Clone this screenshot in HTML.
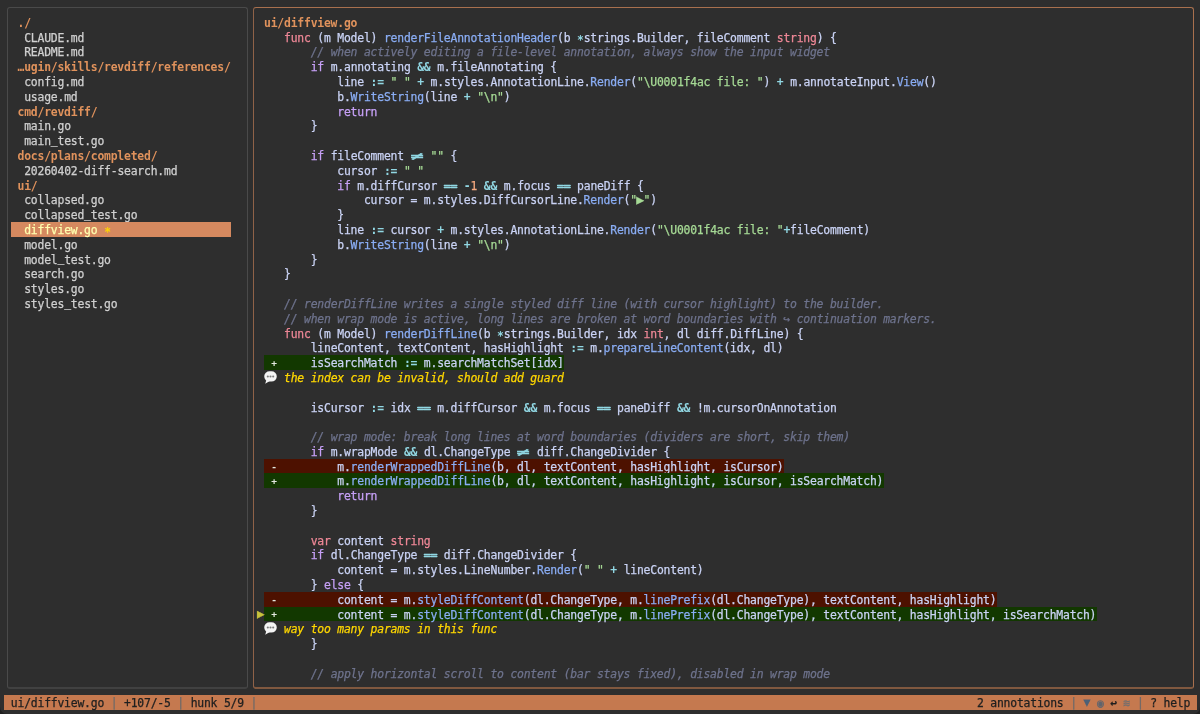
<!DOCTYPE html>
<html lang="en"><head><meta charset="utf-8"><title>revdiff - ui/diffview.go</title>
<style>
html,body{margin:0;padding:0;background:#2e2e2e;will-change:transform;}
body{width:1200px;height:714px;overflow:hidden;position:relative;font-family:"DejaVu Sans Mono","Liberation Mono",monospace;font-size:11.4px;color:#cad3f5;}
.r{position:absolute;left:0;height:14.795px;line-height:17.195px;white-space:pre;margin:0;letter-spacing:-0.2005px;-webkit-text-stroke:0.25px currentColor;}
.r>*{}
.seg{position:absolute;top:0;height:14.795px;white-space:pre;}
.pane{position:absolute;box-sizing:border-box;border:1px solid #4d4d4d;border-radius:3px;}
.d{color:#e0925c;font-weight:bold;-webkit-text-stroke:0;}
.fl{color:#d0d0d0;}
.k{color:#c6a0f6;}
.kd{color:#ed8796;}
.f{color:#8aadf4;}
.s{color:#a6da95;}
.n{color:#f5a97f;}
.o{color:#91d7e3;font-weight:bold;-webkit-text-stroke:0;}
.c{color:#6e738d;font-style:italic;}
.add{background:#123800;}
.rem{background:#4d1100;}
.ann{color:#ffd700;font-style:italic;}
.sy{font-family:"DejaVu Sans Mono","DejaVu Sans",monospace;font-style:normal;}
.st{position:relative;top:2px;}
.eq{-webkit-text-stroke:0.45px currentColor;font-weight:normal;text-shadow:0.55px 0 0 currentColor,-0.55px 0 0 currentColor;}
.ne{display:inline-block;width:13.326px;text-align:center;transform:scaleX(1.9);letter-spacing:0;font-weight:normal;-webkit-text-stroke:0.45px currentColor;}
.ic{position:relative;}
.us{position:relative;top:-1.4px;}
.tri{display:inline-block;width:6.663px;font-size:13px;line-height:0;letter-spacing:0;text-indent:-0.6px;}
.bub{position:absolute;left:0;top:0.8px;}
.sb{background:#c5794f;color:#202020;}
.sep{color:#6f6a68;font-style:normal;}
</style></head><body>
<div class="pane" style="left:7px;top:7px;width:241px;height:682px;border-color:#4a4a4a;border-bottom:2px solid #414141"></div>
<div class="pane" style="left:253px;top:7px;width:941px;height:682px;border-color:#a8704e;border-left-color:#8f6248;border-bottom:2px solid #80583f"></div>
<div class="r " style="top:14.845px;"><span class="seg d" style="left:17.526px;">./</span></div>
<div class="r " style="top:29.64px;"><span class="seg fl" style="left:24.189px;">CLAUDE.md</span></div>
<div class="r " style="top:44.435px;"><span class="seg fl" style="left:24.189px;">README.md</span></div>
<div class="r " style="top:59.23px;"><span class="seg d" style="left:17.526px;">…ugin/skills/revdiff/references/</span></div>
<div class="r " style="top:74.025px;"><span class="seg fl" style="left:24.189px;">config.md</span></div>
<div class="r " style="top:88.82px;"><span class="seg fl" style="left:24.189px;">usage.md</span></div>
<div class="r " style="top:103.615px;"><span class="seg d" style="left:17.526px;">cmd/revdiff/</span></div>
<div class="r " style="top:118.41px;"><span class="seg fl" style="left:24.189px;">main.go</span></div>
<div class="r " style="top:133.205px;"><span class="seg fl" style="left:24.189px;">main<span class="us">_</span>test.go</span></div>
<div class="r " style="top:148.0px;"><span class="seg d" style="left:17.526px;">docs/plans/completed/</span></div>
<div class="r " style="top:162.795px;"><span class="seg fl" style="left:24.189px;">20260402-diff-search.md</span></div>
<div class="r " style="top:177.59px;"><span class="seg d" style="left:17.526px;">ui/</span></div>
<div class="r " style="top:192.385px;"><span class="seg fl" style="left:24.189px;">collapsed.go</span></div>
<div class="r " style="top:207.18px;"><span class="seg fl" style="left:24.189px;">collapsed<span class="us">_</span>test.go</span></div>
<div class="r " style="top:221.975px;"><span class="seg " style="left:10.863px;width:219.879px;background:#d5895f;"></span><span class="seg " style="left:24.189px;color:#ffffaf;">diffview.go</span><span class="seg " style="left:104.145px;color:#ffd700;margin-top:1.6px;">*</span></div>
<div class="r " style="top:236.77px;"><span class="seg fl" style="left:24.189px;">model.go</span></div>
<div class="r " style="top:251.565px;"><span class="seg fl" style="left:24.189px;">model<span class="us">_</span>test.go</span></div>
<div class="r " style="top:266.36px;"><span class="seg fl" style="left:24.189px;">search.go</span></div>
<div class="r " style="top:281.155px;"><span class="seg fl" style="left:24.189px;">styles.go</span></div>
<div class="r " style="top:295.95px;"><span class="seg fl" style="left:24.189px;">styles<span class="us">_</span>test.go</span></div>
<div class="r " style="top:14.845px;"><span class="seg d" style="left:264.057px;">ui/diffview.go</span></div>
<div class="r " style="top:29.64px;"><span class="seg " style="left:284.046px;"><span class="kd">func</span> (m Model) <span class="f">renderFileAnnotationHeader</span>(b <b class="o st">*</b>strings.Builder, fileComment <span class="kd">string</span>) {</span></div>
<div class="r " style="top:44.435px;"><span class="seg " style="left:284.046px;">    <span class="c">// when actively editing a file-level annotation, always show the input widget</span></span></div>
<div class="r " style="top:59.23px;"><span class="seg " style="left:284.046px;">    <span class="k">if</span> m.annotating <span class="o">&amp;&amp;</span> m.fileAnnotating {</span></div>
<div class="r " style="top:74.025px;"><span class="seg " style="left:284.046px;">        line <span class="o">:=</span> <span class="s">" "</span> <span class="o">+</span> m.styles.AnnotationLine.<span class="f">Render</span>(<span class="s">"\U0001f4ac file: "</span>) <span class="o">+</span> m.annotateInput.<span class="f">View</span>()</span></div>
<div class="r " style="top:88.82px;"><span class="seg " style="left:284.046px;">        b.<span class="f">WriteString</span>(line <span class="o">+</span> <span class="s">"\n"</span>)</span></div>
<div class="r " style="top:103.615px;"><span class="seg " style="left:284.046px;">        <span class="k">return</span></span></div>
<div class="r " style="top:118.41px;"><span class="seg " style="left:284.046px;">    }</span></div>
<div class="r " style="top:148.0px;"><span class="seg " style="left:284.046px;">    <span class="k">if</span> fileComment <b class="o ne">≠</b> <span class="s">""</span> {</span></div>
<div class="r " style="top:162.795px;"><span class="seg " style="left:284.046px;">        cursor <span class="o">:=</span> <span class="s">" "</span></span></div>
<div class="r " style="top:177.59px;"><span class="seg " style="left:284.046px;">        <span class="k">if</span> m.diffCursor <b class="o eq">==</b> <span class="o">-</span><span class="n">1</span> <span class="o">&amp;&amp;</span> m.focus <b class="o eq">==</b> paneDiff {</span></div>
<div class="r " style="top:192.385px;"><span class="seg " style="left:284.046px;">            cursor = m.styles.DiffCursorLine.<span class="f">Render</span>(<span class="s">"<i class="sy tri">▶</i>"</span>)</span></div>
<div class="r " style="top:207.18px;"><span class="seg " style="left:284.046px;">        }</span></div>
<div class="r " style="top:221.975px;"><span class="seg " style="left:284.046px;">        line <span class="o">:=</span> cursor <span class="o">+</span> m.styles.AnnotationLine.<span class="f">Render</span>(<span class="s">"\U0001f4ac file: "</span><span class="o">+</span>fileComment)</span></div>
<div class="r " style="top:236.77px;"><span class="seg " style="left:284.046px;">        b.<span class="f">WriteString</span>(line <span class="o">+</span> <span class="s">"\n"</span>)</span></div>
<div class="r " style="top:251.565px;"><span class="seg " style="left:284.046px;">    }</span></div>
<div class="r " style="top:266.36px;"><span class="seg " style="left:284.046px;">}</span></div>
<div class="r " style="top:295.95px;"><span class="seg " style="left:284.046px;"><span class="c">// renderDiffLine writes a single styled diff line (with cursor highlight) to the builder.</span></span></div>
<div class="r " style="top:310.745px;"><span class="seg " style="left:284.046px;"><span class="c">// when wrap mode is active, long lines are broken at word boundaries with <i class="sy">↪</i> continuation markers.</span></span></div>
<div class="r " style="top:325.54px;"><span class="seg " style="left:284.046px;"><span class="kd">func</span> (m Model) <span class="f">renderDiffLine</span>(b <b class="o st">*</b>strings.Builder, idx <span class="kd">int</span>, dl diff.DiffLine) {</span></div>
<div class="r " style="top:340.335px;"><span class="seg " style="left:284.046px;">    lineContent, textContent, hasHighlight <span class="o">:=</span> m.<span class="f">prepareLineContent</span>(idx, dl)</span></div>
<div class="r " style="top:355.13px;"><span class="seg add" style="left:264.057px;width:299.835px;"></span><span class="seg " style="left:270.72px;color:#e4e8e0;font-size:9.5px;font-weight:bold;margin-left:0.47px;margin-top:-1.2px;letter-spacing:0;-webkit-text-stroke:0;">+</span><span class="seg " style="left:284.046px;">    isSearchMatch <span class="o">:=</span> m.searchMatchSet[idx]</span></div>
<div class="r " style="top:369.925px;"><span class="seg" style="left:264.057px;width:13.326px"><svg class="bub" viewBox="0 0 14 14" width="13.4" height="13.4"><path d="M2.500 9.200L1.300 13.300 6 10.500z" fill="#f4f4f4"/><rect x=".3" y=".3" width="13" height="10.800" rx="5.500" ry="5" fill="#f4f4f4"/><circle cx="4" cy="5.700" r="1.100" fill="#7c7c7c"/><circle cx="6.800" cy="5.700" r="1.100" fill="#7c7c7c"/><circle cx="9.600" cy="5.700" r="1.100" fill="#7c7c7c"/></svg></span><span class="seg ann" style="left:284.046px;">the index can be invalid, should add guard</span></div>
<div class="r " style="top:399.515px;"><span class="seg " style="left:284.046px;">    isCursor <span class="o">:=</span> idx <b class="o eq">==</b> m.diffCursor <span class="o">&amp;&amp;</span> m.focus <b class="o eq">==</b> paneDiff <span class="o">&amp;&amp;</span> !m.cursorOnAnnotation</span></div>
<div class="r " style="top:429.105px;"><span class="seg " style="left:284.046px;">    <span class="c">// wrap mode: break long lines at word boundaries (dividers are short, skip them)</span></span></div>
<div class="r " style="top:443.9px;"><span class="seg " style="left:284.046px;">    <span class="k">if</span> m.wrapMode <span class="o">&amp;&amp;</span> dl.ChangeType <b class="o ne">≠</b> diff.ChangeDivider {</span></div>
<div class="r " style="top:458.695px;"><span class="seg rem" style="left:264.057px;width:519.714px;"></span><span class="seg " style="left:270.72px;color:#e4e8e0;font-size:9.5px;font-weight:bold;margin-left:0.47px;margin-top:-1.2px;letter-spacing:0;-webkit-text-stroke:0;">-</span><span class="seg " style="left:284.046px;">        m.<span class="f">renderWrappedDiffLine</span>(b, dl, textContent, hasHighlight, isCursor)</span></div>
<div class="r " style="top:473.49px;"><span class="seg add" style="left:264.057px;width:619.659px;"></span><span class="seg " style="left:270.72px;color:#e4e8e0;font-size:9.5px;font-weight:bold;margin-left:0.47px;margin-top:-1.2px;letter-spacing:0;-webkit-text-stroke:0;">+</span><span class="seg " style="left:284.046px;">        m.<span class="f">renderWrappedDiffLine</span>(b, dl, textContent, hasHighlight, isCursor, isSearchMatch)</span></div>
<div class="r " style="top:488.285px;"><span class="seg " style="left:284.046px;">        <span class="k">return</span></span></div>
<div class="r " style="top:503.08px;"><span class="seg " style="left:284.046px;">    }</span></div>
<div class="r " style="top:532.67px;"><span class="seg " style="left:284.046px;">    <span class="kd">var</span> content <span class="kd">string</span></span></div>
<div class="r " style="top:547.465px;"><span class="seg " style="left:284.046px;">    <span class="k">if</span> dl.ChangeType <b class="o eq">==</b> diff.ChangeDivider {</span></div>
<div class="r " style="top:562.26px;"><span class="seg " style="left:284.046px;">        content = m.styles.LineNumber.<span class="f">Render</span>(<span class="s">" "</span> <span class="o">+</span> lineContent)</span></div>
<div class="r " style="top:577.055px;"><span class="seg " style="left:284.046px;">    } <span class="k">else</span> {</span></div>
<div class="r " style="top:591.85px;"><span class="seg rem" style="left:264.057px;width:732.93px;"></span><span class="seg " style="left:270.72px;color:#e4e8e0;font-size:9.5px;font-weight:bold;margin-left:0.47px;margin-top:-1.2px;letter-spacing:0;-webkit-text-stroke:0;">-</span><span class="seg " style="left:284.046px;">        content = m.<span class="f">styleDiffContent</span>(dl.ChangeType, m.<span class="f">linePrefix</span>(dl.ChangeType), textContent, hasHighlight)</span></div>
<div class="r " style="top:606.645px;"><span class="seg add" style="left:264.057px;width:832.875px;"></span><span class="seg " style="left:270.72px;color:#e4e8e0;font-size:9.5px;font-weight:bold;margin-left:0.47px;margin-top:-1.2px;letter-spacing:0;-webkit-text-stroke:0;">+</span><span class="seg sy" style="left:257.394px;color:#c8c23c;font-size:12.5px;margin-top:-1.2px;margin-left:-0.3px;letter-spacing:0;">▶</span><span class="seg " style="left:284.046px;">        content = m.<span class="f">styleDiffContent</span>(dl.ChangeType, m.<span class="f">linePrefix</span>(dl.ChangeType), textContent, hasHighlight, isSearchMatch)</span></div>
<div class="r " style="top:621.44px;"><span class="seg" style="left:264.057px;width:13.326px"><svg class="bub" viewBox="0 0 14 14" width="13.4" height="13.4"><path d="M2.500 9.200L1.300 13.300 6 10.500z" fill="#f4f4f4"/><rect x=".3" y=".3" width="13" height="10.800" rx="5.500" ry="5" fill="#f4f4f4"/><circle cx="4" cy="5.700" r="1.100" fill="#7c7c7c"/><circle cx="6.800" cy="5.700" r="1.100" fill="#7c7c7c"/><circle cx="9.600" cy="5.700" r="1.100" fill="#7c7c7c"/></svg></span><span class="seg ann" style="left:284.046px;">way too many params in this func</span></div>
<div class="r " style="top:636.235px;"><span class="seg " style="left:284.046px;">    }</span></div>
<div class="r " style="top:665.825px;"><span class="seg " style="left:284.046px;">    <span class="c">// apply horizontal scroll to content (bar stays fixed), disabled in wrap mode</span></span></div>
<div class="r " style="top:695.415px;"><span class="seg sb" style="left:4.2px;width:1192.677px;"></span><span class="seg " style="left:4.2px;color:#202020;"> ui/diffview.go <i class="sep">|</i> +107/-5 <i class="sep">|</i> hunk 5/9 <i class="sep">|</i></span><span class="seg " style="left:976.998px;color:#202020;">2 annotations <i class="sep">|</i> <i class="sy ic" style="color:#4b6076;top:-1.3px">▼</i> <i class="sy ic" style="color:#5f646d;top:-0.8px">◉</i> <i class="sy ic" style="color:#1e1e1e;top:-0.8px;font-weight:bold">↩</i> <i class="sy ic" style="color:#6f6e70;top:-0.3px">≋</i> <i class="sep">|</i> ? help</span></div>
<div style="position:absolute;left:0;top:0;width:1200px;height:714px;box-sizing:border-box;border-radius:0 0 7px 7px;box-shadow:0 0 0 12px #1f1f1f;pointer-events:none"></div>
</body></html>
